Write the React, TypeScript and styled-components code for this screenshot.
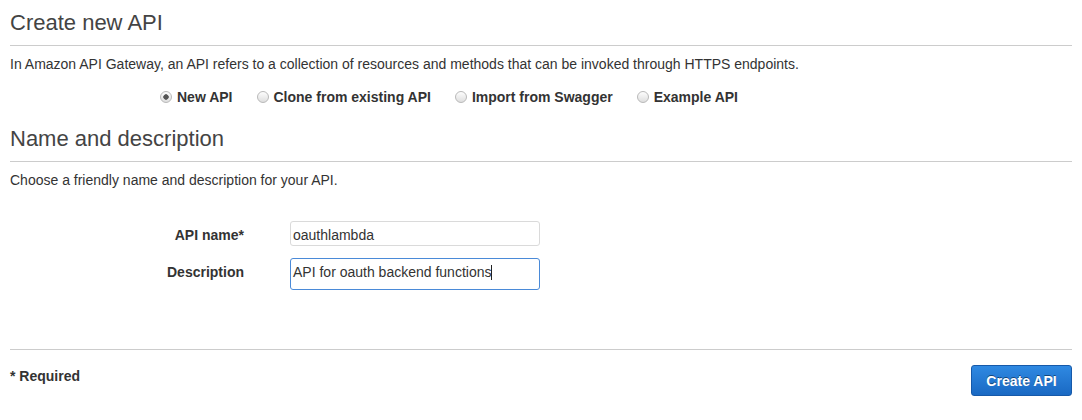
import React from "react";
import styled, { createGlobalStyle } from "styled-components";

const GlobalStyle = createGlobalStyle`
  html, body {
    margin: 0;
    padding: 0;
    background: #fff;
  }
  body {
    font-family: "Liberation Sans", Arial, Helvetica, sans-serif;
    color: #333;
    font-size: 14px;
    line-height: 20px;
  }
`;

const Page = styled.div`
  width: 1082px;
  box-sizing: border-box;
  padding: 0 10px;
`;

const SectionTitle = styled.h1<{ $top: number }>`
  margin: ${(p) => p.$top}px 0 0;
  padding: 0 0 9px;
  font-size: 22px;
  line-height: 26px;
  font-weight: normal;
  color: #444;
  border-bottom: 1px solid #ccc;
`;

const Intro = styled.p`
  margin: 8px 0 0;
  font-size: 14px;
  line-height: 20px;
  color: #333;
`;

const RadioRow = styled.div`
  display: flex;
  align-items: center;
  gap: 24px;
  margin-top: 13px;
  padding-left: 150px;
  height: 20px;
`;

const RadioOption = styled.label`
  display: flex;
  align-items: center;
  gap: 5px;
  font-weight: bold;
  font-size: 14px;
  color: #333;
  cursor: pointer;
`;

const RadioInput = styled.input.attrs({ type: "radio" })`
  appearance: none;
  -webkit-appearance: none;
  margin: 0;
  width: 12px;
  height: 12px;
  border-radius: 50%;
  border: 1px solid #b9b9b9;
  box-sizing: border-box;
  background: linear-gradient(#fdfdfd, #dedede);
  &:checked {
    background: radial-gradient(circle, #555 0 2px, #6a6a6a 2.5px, transparent 3px),
      linear-gradient(#fdfdfd, #dedede);
  }
`;

const FormGrid = styled.div`
  display: grid;
  grid-template-columns: 234px 250px;
  column-gap: 46px;
  row-gap: 12px;
  align-items: baseline;
  margin-top: 31px;
`;

const FieldLabel = styled.div`
  text-align: right;
  font-weight: bold;
  font-size: 14px;
  line-height: 20px;
  color: #333;
`;

const TextField = styled.div<{ $focused?: boolean; $height: number; $padTop: number }>`
  box-sizing: border-box;
  height: ${(p) => p.$height}px;
  padding: ${(p) => p.$padTop}px 2px 0;
  border: 1px solid ${(p) => (p.$focused ? "#4a8ad8" : "#dadada")};
  border-radius: 3px;
  font-size: 14px;
  line-height: 20px;
  color: #333;
  white-space: nowrap;
  overflow: hidden;
`;

const Caret = styled.span`
  display: inline-block;
  width: 1px;
  height: 15px;
  background: #222;
  vertical-align: -3px;
`;

const Footer = styled.div`
  display: flex;
  justify-content: space-between;
  align-items: flex-start;
  margin-top: 59px;
  padding-top: 15px;
  border-top: 1px solid #ccc;
`;

const RequiredNote = styled.div`
  margin-top: 1px;
  font-weight: bold;
  font-size: 14px;
  line-height: 20px;
  color: #333;
`;

const PrimaryButton = styled.button`
  box-sizing: border-box;
  width: 101px;
  height: 31px;
  padding: 0;
  border: 1px solid #1659a9;
  border-radius: 3px;
  background: linear-gradient(#2f89e2, #1a69c3);
  color: #fff;
  font-family: "Liberation Sans", Arial, sans-serif;
  font-weight: bold;
  font-size: 14px;
  line-height: 20px;
  text-shadow: 0 -1px 0 rgba(0, 0, 0, 0.45);
  cursor: pointer;
`;

const options = [
  { label: "New API", checked: true },
  { label: "Clone from existing API", checked: false },
  { label: "Import from Swagger", checked: false },
  { label: "Example API", checked: false },
];

export default function App() {
  return (
    <Page>
      <GlobalStyle />
      <SectionTitle $top={10}>Create new API</SectionTitle>
      <Intro>
        In Amazon API Gateway, an API refers to a collection of resources and methods that can be
        invoked through HTTPS endpoints.
      </Intro>
      <RadioRow>
        {options.map((o) => (
          <RadioOption key={o.label}>
            <RadioInput name="apiType" defaultChecked={o.checked} />
            {o.label}
          </RadioOption>
        ))}
      </RadioRow>
      <SectionTitle $top={19}>Name and description</SectionTitle>
      <Intro>Choose a friendly name and description for your API.</Intro>
      <FormGrid>
        <FieldLabel>API name*</FieldLabel>
        <TextField $height={25} $padTop={3}>
          oauthlambda
        </TextField>
        <FieldLabel>Description</FieldLabel>
        <TextField $focused $height={32} $padTop={3}>
          API for oauth backend functions
          <Caret />
        </TextField>
      </FormGrid>
      <Footer>
        <RequiredNote>* Required</RequiredNote>
        <PrimaryButton>Create API</PrimaryButton>
      </Footer>
    </Page>
  );
}
